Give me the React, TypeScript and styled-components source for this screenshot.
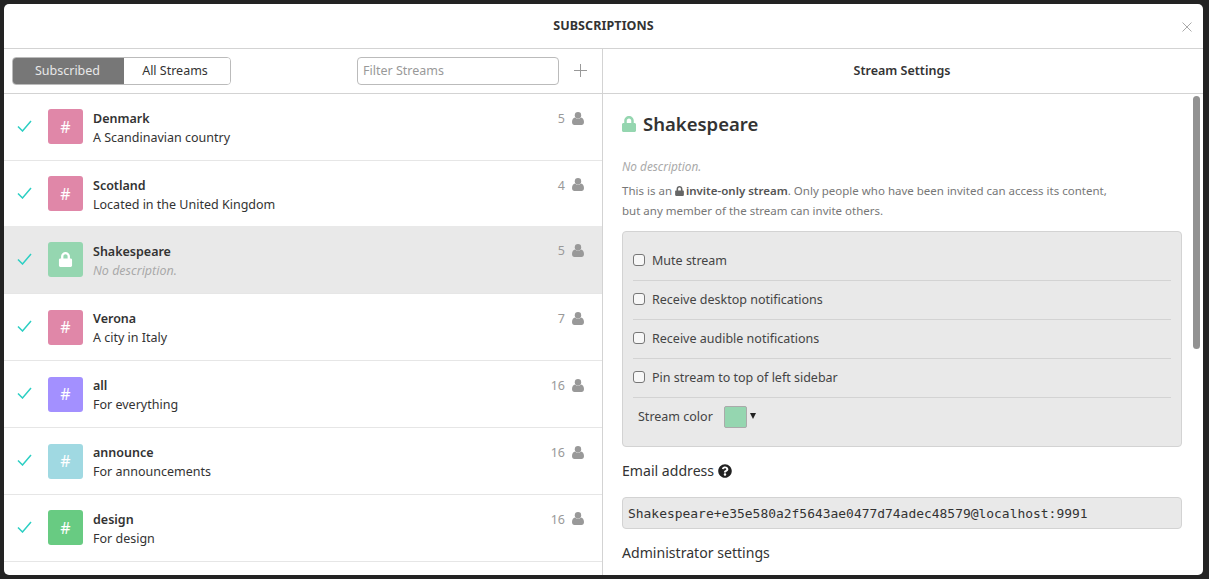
import React from "react";
import styled, { createGlobalStyle } from "styled-components";
import { FaLock, FaQuestionCircle } from "react-icons/fa";

const Global = createGlobalStyle`
  html, body { margin: 0; padding: 0; height: 100%; overflow: hidden; background: #222; }
  * { box-sizing: border-box; }
  body { font-family: "Noto Sans", "Open Sans", sans-serif; font-size: 13px; color: #333; }
`;

const Backdrop = styled.div`
  width: 1209px; height: 579px; padding: 4px 6px 4px 4px; background: #232323;
`;
const Modal = styled.div`
  width: 1199px; height: 571px; background: #fff; border-radius: 5px; overflow: hidden;
  display: flex; flex-direction: column; position: relative;
`;
const Header = styled.header`
  height: 45px; flex: none; border-bottom: 1px solid #d3d3d3; padding-bottom: 2px;
  display: flex; align-items: center; justify-content: center;
  font-weight: 700; font-size: 12.5px; letter-spacing: 0.1px; color: #333;
`;
const Close = styled.svg`
  position: absolute; right: 11px; top: 18px; width: 10px; height: 10px;
`;
const Columns = styled.div`
  flex: 1; display: grid; grid-template-columns: 599px 600px; min-height: 0;
`;
const Left = styled.section`
  border-right: 1px solid #d3d3d3; display: flex; flex-direction: column; min-height: 0; overflow: hidden;
`;
const Toolbar = styled.div`
  height: 45px; flex: none; border-bottom: 1px solid #d3d3d3; display: flex; align-items: center;
  padding: 0 15px 0 8px;
`;
const Tabs = styled.div`
  display: flex; width: 219px; height: 28px; border: 1px solid #bbb; border-radius: 4px; overflow: hidden;
`;
const Tab = styled.div<{ $active?: boolean }>`
  display: flex; align-items: center; justify-content: center; padding-bottom: 2px;
  width: ${p => (p.$active ? "111px" : "106px")};
  padding-right: ${p => (p.$active ? "2px" : "4px")};
  background: ${p => (p.$active ? "#777" : "#fff")};
  color: ${p => (p.$active ? "#e8e8e8" : "#333")};
  font-size: 12.5px;
`;
const Filter = styled.div`
  margin-left: auto; width: 202px; height: 28px; border: 1px solid #bbb; border-radius: 4px; padding-bottom: 2px;
  display: flex; align-items: center; padding-left: 5px; color: #999; font-size: 12.5px;
`;
const Plus = styled.svg`
  margin-left: 15px; width: 13px; height: 13px; flex: none; margin-top: -2px;
`;
const Row = styled.div<{ $active?: boolean }>`
  height: ${p => (p.$active ? "68.33px" : "66.83px")};
  margin-top: ${p => (p.$active ? "-1.5px" : "0")};
  flex: none; border-bottom: 1px solid #e6e6e6; display: flex; align-items: center;
  padding: 0 18px 0 13px; background: ${p => (p.$active ? "#e9e9e9" : "#fff")};
`;
const Check = styled.svg`
  width: 15px; height: 12px; flex: none; margin: -2px 16px 0 0;
`;
const Swatch = styled.div<{ $c: string }>`
  width: 35px; height: 35px; flex: none; border-radius: 3px; background: ${p => p.$c};
  color: #fff; display: flex; align-items: center; justify-content: center; font-size: 16px; margin-right: 10px;
`;
const Info = styled.div`
  flex: 1; min-width: 0; display: flex; flex-direction: column; gap: 1px; margin-top: 3px;
`;
const Name = styled.div`
  font-weight: 600; font-size: 12.5px; line-height: 18px; color: #333;
`;
const Desc = styled.div<{ $muted?: boolean }>`
  font-size: 12.5px; line-height: 18px; color: ${p => (p.$muted ? "#aaa" : "#333")};
  font-style: ${p => (p.$muted ? "italic" : "normal")};
`;
const Count = styled.div`
  align-self: flex-start; margin-top: 16px; display: flex; align-items: center; gap: 7px; color: #999; font-size: 12.5px; line-height: 18px;
`;
const Person = styled.svg`
  width: 12px; height: 13px; flex: none; margin-top: -2px;
`;
const Right = styled.section`
  display: flex; flex-direction: column; min-height: 0; position: relative;
`;
const RightHead = styled.div`
  height: 45px; flex: none; border-bottom: 1px solid #d3d3d3; display: flex; align-items: center; justify-content: center;
  font-weight: 600; font-size: 12.5px; color: #333; padding: 0 2px 2px 0;
`;
const Scroll = styled.div`
  flex: 1; overflow: hidden; padding: 0 21px 0 19px; min-height: 0;
`;
const Thumb = styled.div`
  position: absolute; right: 3px; top: 47px; width: 7px; height: 253px; background: #929292; border-radius: 4px;
`;
const Title = styled.h2`
  margin: 17px 0 0; display: flex; align-items: center; gap: 7px; font-size: 18.5px; line-height: 26px; font-weight: 600; color: #333;
  svg { color: #95d6b0; width: 14px; height: 16px; }
`;
const NoDesc = styled.p`
  margin: 20px 0 0; font-size: 11.8px; line-height: 18px; font-style: italic; color: #aaa;
`;
const Para = styled.p`
  margin: 6px 0 0; font-size: 11.5px; line-height: 20px; color: #777;
  b { color: #555; font-weight: 600; }
  svg { width: 9px; height: 10px; vertical-align: -1px; color: #666; margin: 0 2px 0 0; }
`;
const Box = styled.div`
  margin-top: 10px; height: 216px; background: #e9e9e9; border: 1px solid #d3d3d3; border-radius: 4px;
  padding: 10px 10px 0;
`;
const Option = styled.label`
  height: 39px; padding-bottom: 2px; display: flex; align-items: center; gap: 7px; border-bottom: 1px solid #d3d3d3; font-size: 12.5px; color: #444;
`;
const CheckBox = styled.span`
  width: 12px; height: 12px; border: 1px solid #777; border-radius: 3px; background: #f7f7f7; flex: none;
`;
const ColorRow = styled.div`
  height: 37px; display: flex; align-items: center; padding-left: 5px; font-size: 12.5px; color: #444;
`;
const ColorChip = styled.span`
  width: 23px; height: 22px; margin-left: 11px; background: #95d6b0; border: 1px solid #aaa; border-radius: 2px;
`;
const Caret = styled.svg`
  margin: -2px 0 0 3px; width: 6px; height: 6px;
`;
const Label = styled.div<{ $top: number }>`
  margin-top: ${p => p.$top}px; font-size: 14.1px; line-height: 20px; color: #333; display: flex; align-items: center; gap: 4px;
  svg { width: 14px; height: 14px; color: #222; }
`;
const Email = styled.div`
  margin-top: 16px; height: 32px; background: #e9e9e9; border: 1px solid #d3d3d3; border-radius: 4px;
  display: flex; align-items: center; padding-left: 5px; font-family: "DejaVu Sans Mono", monospace; font-size: 12.95px; color: #333;
`;

const streams = [
  { n: "Denmark", d: "A Scandinavian country", c: "#e087a8", u: 5 },
  { n: "Scotland", d: "Located in the United Kingdom", c: "#e087a8", u: 4 },
  { n: "Shakespeare", d: "No description.", c: "#95d6b0", u: 5, lock: true },
  { n: "Verona", d: "A city in Italy", c: "#e087a8", u: 7 },
  { n: "all", d: "For everything", c: "#a390ff", u: 16 },
  { n: "announce", d: "For announcements", c: "#a0d9e2", u: 16 },
  { n: "design", d: "For design", c: "#68cb82", u: 16 },
];
const options = ["Mute stream", "Receive desktop notifications", "Receive audible notifications", "Pin stream to top of left sidebar"];

export default function App() {
  return (
    <Backdrop>
      <Global />
      <Modal>
        <Header>SUBSCRIPTIONS</Header>
        <Close viewBox="0 0 10 10"><path d="M.5.5l9 9M9.5.5l-9 9" stroke="#aaa" strokeWidth="1" fill="none" /></Close>
        <Columns>
          <Left>
            <Toolbar>
              <Tabs><Tab $active>Subscribed</Tab><Tab>All Streams</Tab></Tabs>
              <Filter>Filter Streams</Filter>
              <Plus viewBox="0 0 13 13"><path d="M6.5 0v13M0 6.5h13" stroke="#999" strokeWidth="1" fill="none" /></Plus>
            </Toolbar>
            {streams.map(s => (
              <Row key={s.n} $active={s.lock}>
                <Check viewBox="0 0 15 12"><path d="M1 6.5l4.5 4.5L14 1" stroke="#2ccfc3" strokeWidth="1.5" fill="none" /></Check>
                <Swatch $c={s.c}>{s.lock ? <FaLock size={15} /> : "#"}</Swatch>
                <Info>
                  <Name>{s.n}</Name>
                  <Desc $muted={s.lock}>{s.d}</Desc>
                </Info>
                <Count>
                  {s.u}
                  <Person viewBox="0 0 12 13">
                    <circle cx="6" cy="3.2" r="3.2" fill="#999" />
                    <path d="M0 10c0-3 1.5-4.4 3-4.6C3.8 6.2 4.8 6.6 6 6.6s2.2-.4 3-1.2c1.5.2 3 1.6 3 4.6 0 1.900-1 3-2.500 3h-7C1 13 0 11.900 0 10z" fill="#999" />
                  </Person>
                </Count>
              </Row>
            ))}
          </Left>
          <Right>
            <RightHead>Stream Settings</RightHead>
            <Thumb />
            <Scroll>
              <Title><FaLock />Shakespeare</Title>
              <NoDesc>No description.</NoDesc>
              <Para>
                This is an <FaLock /><b>invite-only stream</b>. Only people who have been invited can access its content,<br />
                but any member of the stream can invite others.
              </Para>
              <Box>
                {options.map(o => <Option key={o}><CheckBox />{o}</Option>)}
                <ColorRow>Stream color<ColorChip /><Caret viewBox="0 0 6 6"><path d="M0 0h6L3 6z" fill="#222" /></Caret></ColorRow>
              </Box>
              <Label $top={14}>Email address <FaQuestionCircle /></Label>
              <Email>Shakespeare+e35e580a2f5643ae0477d74adec48579@localhost:9991</Email>
              <Label $top={14}>Administrator settings</Label>
            </Scroll>
          </Right>
        </Columns>
      </Modal>
    </Backdrop>
  );
}
